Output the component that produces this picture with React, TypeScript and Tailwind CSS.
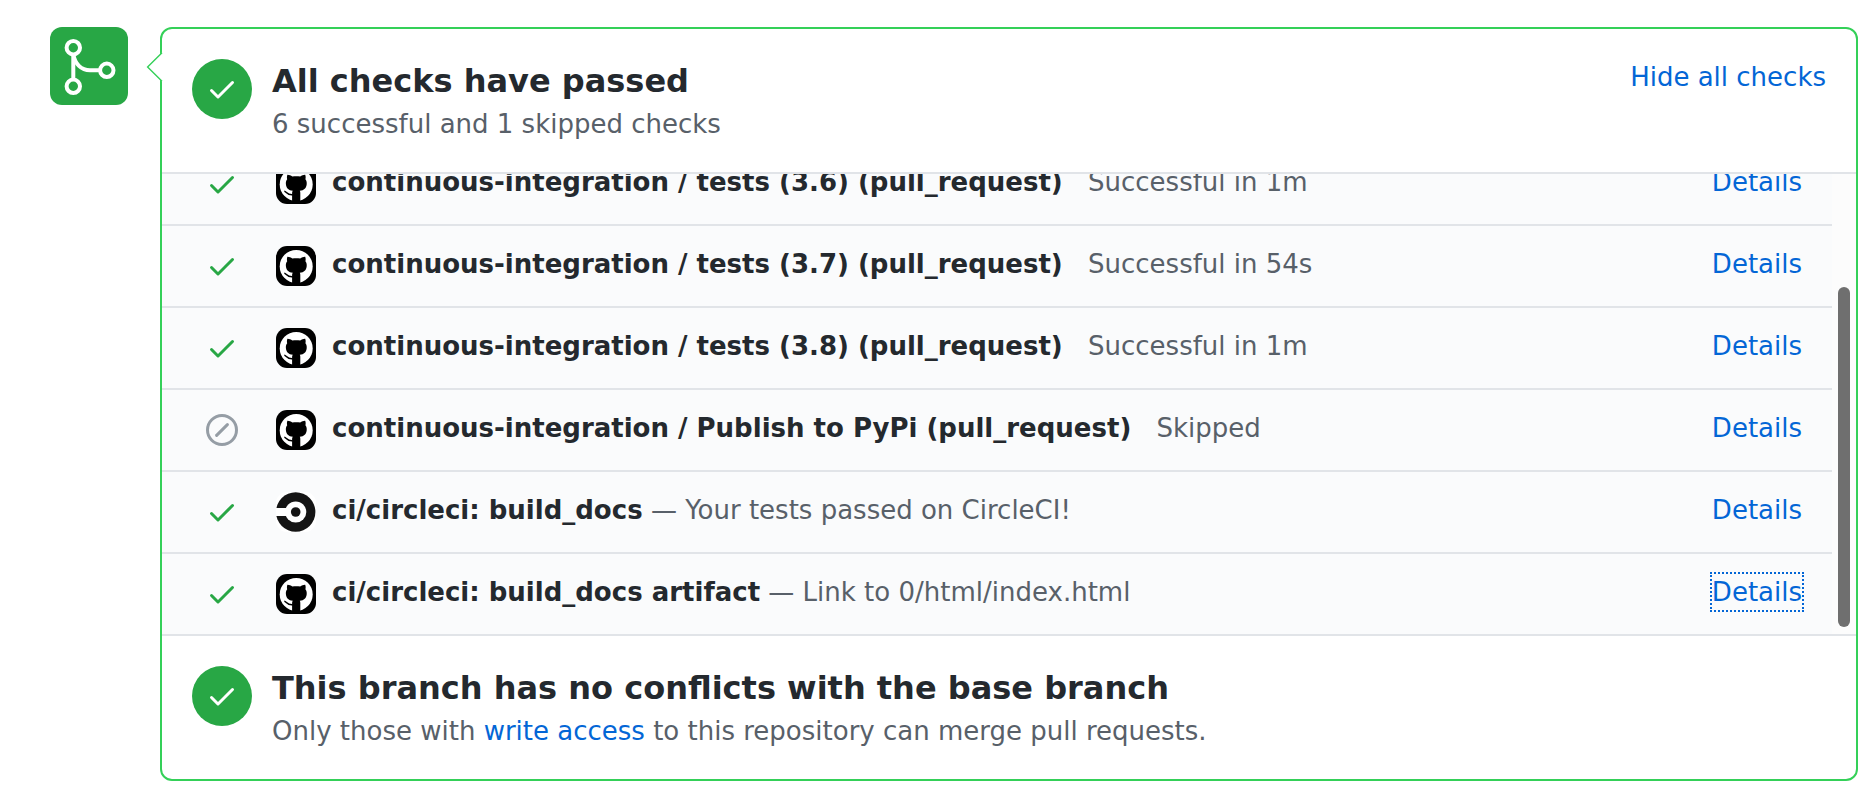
import type { ReactNode } from 'react';

type Status = 'success' | 'skipped';

interface Check {
  name: string;
  note: string;
  status: Status;
  app: 'github' | 'circleci';
  spaced: boolean;
  focused?: boolean;
}

const checks: Check[] = [
  { name: 'continuous-integration / tests (3.6) (pull_request)', note: 'Successful in 1m', status: 'success', app: 'github', spaced: true },
  { name: 'continuous-integration / tests (3.7) (pull_request)', note: 'Successful in 54s', status: 'success', app: 'github', spaced: true },
  { name: 'continuous-integration / tests (3.8) (pull_request)', note: 'Successful in 1m', status: 'success', app: 'github', spaced: true },
  { name: 'continuous-integration / Publish to PyPi (pull_request)', note: 'Skipped', status: 'skipped', app: 'github', spaced: true },
  { name: 'ci/circleci: build_docs', note: '— Your tests passed on CircleCI!', status: 'success', app: 'circleci', spaced: false },
  { name: 'ci/circleci: build_docs artifact', note: '— Link to 0/html/index.html', status: 'success', app: 'github', spaced: false, focused: true },
];

function CheckIcon({ className }: { className: string }) {
  return (
    <svg viewBox="0 0 16 16" fill="currentColor" aria-hidden="true" className={`size-8 ${className}`}>
      <path d="M13.78 4.22a.75.75 0 010 1.06l-7.25 7.25a.75.75 0 01-1.06 0L2.22 9.28a.75.75 0 011.06-1.06L6 10.94l6.72-6.72a.75.75 0 011.06 0z" />
    </svg>
  );
}

function SkipIcon() {
  return (
    <svg viewBox="0 0 16 16" fill="none" stroke="currentColor" aria-hidden="true" className="size-8 text-[#959da5]">
      <circle cx="8" cy="8" r="7.25" strokeWidth="1.5" />
      <path d="M5.3 10.7l5.4-5.4" strokeWidth="1.5" strokeLinecap="round" />
    </svg>
  );
}

function MergeIcon() {
  return (
    <svg viewBox="0 0 64 64" fill="none" stroke="white" strokeWidth="4" aria-hidden="true" className="size-16">
      <circle cx="16.3" cy="13.7" r="6.7" />
      <circle cx="16.3" cy="52.3" r="6.7" />
      <circle cx="49.8" cy="36.3" r="6.7" />
      <path d="M16.3 20v26" />
      <path d="M16.3 20c1.5 10 8 16.3 16.7 16.3h10" />
    </svg>
  );
}

function GitHubAvatar() {
  return (
    <svg viewBox="0 0 40 40" aria-hidden="true" className="size-10 shrink-0">
      <rect width="40" height="40" rx="11" fill="black" />
      <circle cx="20.2" cy="20.4" r="16.5" fill="white" />
      <path
        fill="black"
        d="M11.4 10.8C13 10.7 14.8 11.5 16.4 12.5C18.8 12 21.8 12 24.2 12.5C25.8 11.5 27.6 10.7 29.2 10.8C29.8 12.4 29.8 13.9 29.4 15.2C30.5 16.6 30.9 18.2 30.7 20.2C30.4 24 28 26.3 23.8 26.8C24.2 27.4 24.3 28.2 24.3 29V38H16.1V29C16.1 28.2 16.3 27.4 16.8 26.8C12.6 26.3 10.2 24 9.9 20.2C9.7 18.2 10.1 16.6 11.2 15.2C10.8 13.9 10.8 12.4 11.4 10.8z"
      />
      <path d="M8.3 27.2C10.6 27.3 10.7 31.4 16.8 30.8" fill="none" stroke="black" strokeWidth="1.5" />
    </svg>
  );
}

function CircleCiAvatar() {
  return (
    <svg viewBox="0 0 40 40" aria-hidden="true" className="size-10 shrink-0">
      <rect width="40" height="40" rx="11" fill="white" />
      <circle cx="19.7" cy="20" r="19.7" fill="#141414" />
      <circle cx="19.7" cy="20" r="10.6" fill="white" />
      <rect x="0" y="16" width="11" height="8" fill="white" />
      <circle cx="19.7" cy="20" r="4.8" fill="#141414" />
    </svg>
  );
}

function StatusSection({ title, children, action }: { title: string; children: ReactNode; action?: ReactNode }) {
  return (
    <section className="flex items-start gap-5 px-[30px] pt-[30px] pb-[27px]">
      <span className="flex size-15 shrink-0 items-center justify-center rounded-full bg-[#28a745]">
        <CheckIcon className="text-white" />
      </span>
      <div className="grow">
        <h2 className="text-[32px] leading-[44px] font-bold">{title}</h2>
        <p className="text-[26px] leading-[42px] text-[#586069]">{children}</p>
      </div>
      {action}
    </section>
  );
}

function CheckRow({ check }: { check: Check }) {
  return (
    <li className="flex shrink-0 items-start border-b-2 border-[#e1e4e8] pt-5 pr-[30px] pb-5 pl-11 last:border-b-0">
      <span className="mt-1 mr-[38px] shrink-0">
        {check.status === 'success' ? <CheckIcon className="text-[#28a745]" /> : <SkipIcon />}
      </span>
      {check.app === 'github' ? <GitHubAvatar /> : <CircleCiAvatar />}
      <p className="ml-4 grow leading-9 text-[#586069]">
        <strong className="font-bold text-[#24292e]">{check.name}</strong>{' '}
        <span className={check.spaced ? 'ml-[17px]' : ''}>{check.note}</span>
      </p>
      <a
        href="#details"
        className={`leading-9 text-[#0366d6] ${check.focused ? 'outline-2 outline-dotted outline-[#0366d6]' : ''}`}
      >
        Details
      </a>
    </li>
  );
}

export default function App() {
  return (
    <main className="flex items-start gap-8 bg-white pt-[27px] pr-[18px] pb-5 pl-[50px] font-['DejaVu_Sans',sans-serif] text-[26px] text-[#24292e]">
      <div className="flex size-[78px] shrink-0 items-center justify-center rounded-xl bg-[#28a745]">
        <MergeIcon />
      </div>
      <div className="relative min-w-0 grow rounded-xl border-2 border-[#34d058] bg-white">
        <svg viewBox="0 0 17 30" aria-hidden="true" className="absolute top-[23px] -left-4 h-[30px] w-[17px]">
          <path d="M16 .5L2 15l14 14.5h1V.5z" fill="white" />
          <path d="M16 .8L1.6 15 16 29.2" fill="none" stroke="#34d058" strokeWidth="1.4" />
        </svg>
        <StatusSection
          title="All checks have passed"
          action={
            <button type="button" className="shrink-0 leading-9 text-[#0366d6]">
              Hide all checks
            </button>
          }
        >
          6 successful and 1 skipped checks
        </StatusSection>
        <div className="flex h-[464px] border-y-2 border-[#e1e4e8] bg-[#fcfcfc]">
          <ul className="flex min-w-0 grow flex-col justify-end overflow-hidden bg-[#fafbfc]">
            {checks.map((check) => (
              <CheckRow key={check.name} check={check} />
            ))}
          </ul>
          <div className="flex w-6 shrink-0 flex-col items-center justify-end pb-[7px]">
            <div className="h-[340px] w-3 rounded-full bg-[#6f6f6f]" />
          </div>
        </div>
        <StatusSection title="This branch has no conflicts with the base branch">
          Only those with{' '}
          <a href="#write-access" className="text-[#0366d6]">
            write access
          </a>{' '}
          to this repository can merge pull requests.
        </StatusSection>
      </div>
    </main>
  );
}
